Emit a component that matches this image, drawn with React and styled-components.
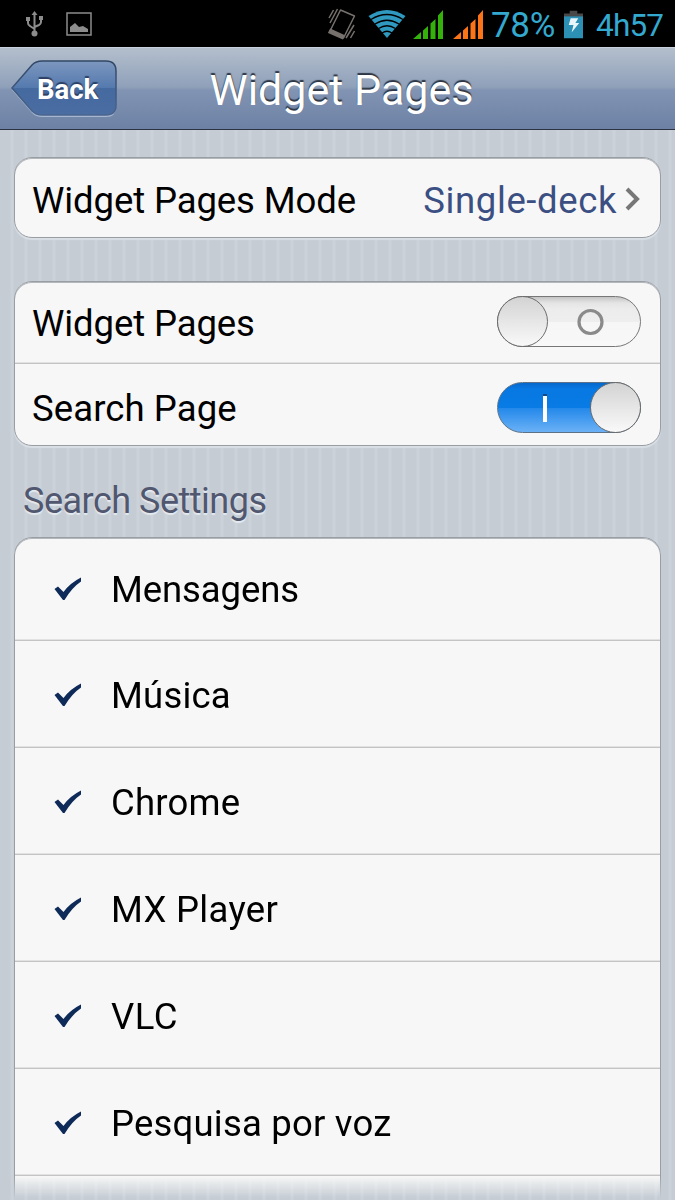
import React from 'react';
import styled, { createGlobalStyle, css } from 'styled-components';

const colors = {
  holo: '#33a9d0',
  card: '#f7f7f7',
  border: '#999ea5',
  divider: '#c4c4c4',
  link: '#3b4f83',
};

const GlobalStyle = createGlobalStyle`
  * {
    box-sizing: border-box;
  }
  body {
    margin: 0;
    font-family: Roboto, sans-serif;
  }
`;

const Screen = styled.div`
  display: flex;
  flex-direction: column;
  width: 675px;
  height: 1200px;
  overflow: hidden;
  background: #c5ccd4 repeating-linear-gradient(90deg, #c5ccd4 0 10px, #cbd2da 11px 13px, #c5ccd4 14px);
`;

const StatusBar = styled.div`
  display: flex;
  flex: none;
  align-items: center;
  height: 47px;
  background: #000;
  color: ${colors.holo};
`;

const StatusIcon = styled.svg`
  flex: none;
  display: block;
  margin-left: ${({ $gap }) => $gap || 0}px;
`;

const StatusText = styled.span`
  width: ${({ $width }) => $width}px;
  margin-left: ${({ $gap }) => $gap}px;
  padding-top: 3px;
  font-size: ${({ $size }) => $size}px;
  line-height: 47px;
  letter-spacing: ${({ $spacing }) => $spacing || 0}px;
  white-space: nowrap;
`;

const NavBar = styled.div`
  display: grid;
  flex: none;
  grid-template-columns: 117px 449px 1fr;
  align-items: center;
  height: 83px;
  border-top: 1px solid #c9d1dd;
  border-bottom: 1px solid #2c3340;
  background: linear-gradient(#b4bfcd 0%, #8fa0b9 48%, #8294b3 52%, #6c81a5 100%);
`;

const BackButton = styled.button`
  display: grid;
  width: 106px;
  height: 58px;
  margin: 0 0 1px 11px;
  padding: 0;
  border: 0;
  background: none;
`;

const BackShape = styled.svg`
  grid-area: 1 / 1;
`;

const BackLabel = styled.span`
  grid-area: 1 / 1;
  padding-left: 26px;
  color: #fff;
  font: bold 27.5px/60px Roboto, sans-serif;
  text-align: left;
  text-shadow: 0 -2px 1px #2b3f63;
`;

const NavTitle = styled.h1`
  margin: 0;
  color: #fff;
  font-size: 43px;
  font-weight: 400;
  line-height: 80px;
  padding-top: 2px;
  text-align: center;
  text-shadow: 0 -2px 1px #2d3644;
`;

const Card = styled.section`
  flex: none;
  margin: ${({ $top }) => $top}px 14px 0;
  border: 1px solid ${colors.border};
  border-radius: 18px;
  background: ${colors.card};
  box-shadow: inset 0 1px 0 #b4b8bd, 0 2px 1px #d9dfe5;
  overflow: hidden;
  ${({ $open }) => $open && css`
    border-bottom: 0;
    border-radius: 18px 18px 0 0;
    box-shadow: inset 0 1px 0 #b4b8bd;
    mask-image: linear-gradient(#000 639px, transparent 661px);
  `}
`;

const Row = styled.div`
  display: flex;
  align-items: center;
  height: ${({ $height }) => $height}px;
  padding: ${({ $shift }) => $shift || 0}px 19px 0 17px;
  border-bottom: ${({ $last }) => ($last ? 0 : 1)}px solid ${colors.divider};
  box-shadow: ${({ $last }) => ($last ? 'none' : 'inset 0 -1px 0 #e2e2e2')};
`;

const RowLabel = styled.span`
  flex: 1;
  padding-top: ${({ $drop }) => $drop || 0}px;
  color: #000;
  font-size: 36.5px;
  line-height: 44px;
  letter-spacing: ${({ $spacing }) => $spacing || 0}px;
  white-space: nowrap;
`;

const RowValue = styled(RowLabel)`
  flex: none;
  color: ${colors.link};
`;

const Chevron = styled.svg`
  margin-left: 8px;
`;

const CheckIcon = styled.svg`
  flex: none;
  margin: 1px 29px 0 22px;
`;

const SectionTitle = styled.h2`
  flex: none;
  height: 91px;
  margin: 0;
  padding-left: 23px;
  color: #50576f;
  font-size: 36px;
  font-weight: 400;
  line-height: 110px;
  letter-spacing: -0.5px;
  text-shadow: 0 2px 1px #e5eaf0;
`;

const Track = styled.span`
  display: flex;
  flex: none;
  align-items: center;
  width: 144px;
  height: 51px;
  margin-bottom: ${({ $on }) => ($on ? 0 : 2)}px;
  border: 1px solid #777;
  border-radius: 26px;
  background: linear-gradient(#c4c4c4, #e4e4e4 12%, #ececec 24%, #eee 50%, #f6f6f6 51%, #f8f8f8);
  ${({ $on }) => $on && css`
    flex-direction: row-reverse;
    border-color: #5d7287;
    background: linear-gradient(#0668cc, #0878e2 12%, #087be5 50%, #2489ea 52%, #6bb1f6);
  `}
`;

const Knob = styled.span`
  width: 51px;
  height: 51px;
  margin: 0 -1px;
  border: 1px solid #6c6c6c;
  border-radius: 50%;
  background: linear-gradient(#d3d3d3, #f9f9f9);
`;

const TrackMark = styled.svg`
  flex: 1;
  height: 48px;
`;

const Toggle = ({ on }) => (
  <Track $on={on}>
    <Knob />
    <TrackMark viewBox="0 0 93 48">
      {on ? (
        <>
          <path d="M45 10h4v3h-4z" fill="#174a80" />
          <path d="M45 12h4v26h-4z" fill="#fff" />
        </>
      ) : (
        <circle cx="43.500" cy="24" r="11.500" fill="none" stroke="#8a8a8a" strokeWidth="3.200" />
      )}
    </TrackMark>
  </Track>
);

const Signal = ({ color, gap }) => (
  <StatusIcon $gap={gap} width="31" height="30" viewBox="0 0 31 30" fill={color}>
    <path d="M0 30l8-7v7zM10 21.500l5-4.500v13h-5zM17.500 14.500l5-4.500v20h-5zM25 6.500l5-5.500v29h-5z" />
  </StatusIcon>
);

const Check = () => (
  <CheckIcon width="28" height="26" viewBox="0 0 28 26">
    <path d="M0.500 12L4 9.500L9.500 15Q16 6 27 0.500V4.500Q18 10.500 10.500 23H9Z" fill="#0e2a58" />
  </CheckIcon>
);

const searchItems = [
  { name: 'Mensagens', spacing: -0.1 },
  { name: 'Música', spacing: 0.2 },
  { name: 'Chrome', spacing: 0.2 },
  { name: 'MX Player', spacing: 0.3 },
  { name: 'VLC', spacing: 0.5 },
  { name: 'Pesquisa por voz', spacing: 0.2 },
];

const App = () => (
  <Screen>
    <GlobalStyle />
    <StatusBar>
      <StatusIcon $gap={25} width="19" height="26" viewBox="0 0 19 26" fill="none" stroke="#8c8c8c" strokeWidth="2">
        <path d="M9.500 3V22M3 8v4q0 2 2 3l4.500 3M16 7v4q0 2-2 3l-4.500 2" />
        <path d="M9.500 0l3 4h-6z" fill="#8c8c8c" stroke="none" />
        <circle cx="9.500" cy="22.500" r="3" fill="#8c8c8c" stroke="none" />
        <path d="M1 6h4v4H1zM14 5h4v4h-4z" fill="#8c8c8c" stroke="none" />
      </StatusIcon>
      <StatusIcon $gap={22} width="26" height="24" viewBox="0 0 26 24" fill="#8c8c8c">
        <path d="M1 1h24v22H1z" fill="none" stroke="#8c8c8c" strokeWidth="1.500" />
        <path d="M4 20v-5l5-4 4 4 4-1 5 3v3z" />
      </StatusIcon>
      <StatusIcon $gap={236} width="28" height="32" viewBox="0 0 28 32" fill="none" stroke="#77716e" strokeWidth="1.500">
        <path d="M12.500 2l14 6-11 22-14-6z" strokeLinejoin="round" />
        <path d="M2.500 21.500l13.500 6-1.500 3-13.500-6z" fill="#77716e" />
        <path d="M9.500 1L2 15M5.500 2L1 10M26 17l-8 13M26.500 23l-4 7" />
      </StatusIcon>
      <StatusIcon $gap={12} width="38" height="30" viewBox="0 0 38 30">
        <path d="M19 29L0.500 7Q19-5 37.500 7Z" fill="#2f99c0" />
        <path d="M3 10.500Q19 0.500 35 10.500M7 15Q19 7.500 31 15M10.500 19.500Q19 14 27.500 19.500M14 24Q19 20.500 24 24" fill="none" stroke="#000" strokeWidth="1.300" />
      </StatusIcon>
      <Signal color="#34b20b" gap={7} />
      <Signal color="#fb7417" gap={9} />
      <StatusText $size={35} $width={64} $gap={7} $spacing={-0.3}>78%</StatusText>
      <StatusIcon $gap={9} width="19" height="30" viewBox="0 0 20 30">
        <path d="M6 1h8v3h6v4H0V4h6z" fill="#484848" />
        <path d="M0 7h20v23H0z" fill="#2c8fb4" />
        <path d="M7 9h8l-3 5h4l-8 10 2-8H5z" fill="#e8f5fb" />
      </StatusIcon>
      <StatusText $size={31.5} $width={70} $gap={13} $spacing={-0.8}>4h57</StatusText>
    </StatusBar>

    <NavBar>
      <BackButton>
        <BackShape width="106" height="58" viewBox="0 0 106 58">
          <defs>
            <linearGradient id="back" x1="0" y1="0" x2="0" y2="1">
              <stop offset="0" stopColor="#7d97bf" />
              <stop offset="0.490" stopColor="#557aae" />
              <stop offset="0.510" stopColor="#456a9f" />
              <stop offset="1" stopColor="#4a6da2" />
            </linearGradient>
            <linearGradient id="backEdge" x1="0" y1="0" x2="0" y2="1">
              <stop offset="0" stopColor="#324764" />
              <stop offset="1" stopColor="#4a6590" />
            </linearGradient>
          </defs>
          <path d="M1 30L21 7Q25 3 31 3H95Q105 3 105 13V47Q105 57 95 57H31Q25 57 21 53Z" fill="#a6b7cf" />
          <path d="M1 28L21 5Q25 1 31 1H95Q105 1 105 11V45Q105 55 95 55H31Q25 55 21 51Z" fill="url(#back)" stroke="url(#backEdge)" strokeWidth="1.500" />
        </BackShape>
        <BackLabel>Back</BackLabel>
      </BackButton>
      <NavTitle>Widget Pages</NavTitle>
    </NavBar>

    <Card $top={27}>
      <Row $height={79} $last $shift={2}>
        <RowLabel $drop={5} $spacing={-0.1}>Widget Pages Mode</RowLabel>
        <RowValue $drop={5} $spacing={0.6}>Single-deck</RowValue>
        <Chevron width="16" height="24" viewBox="0 0 16 24">
          <path d="M2 2l10 10L2 22" fill="none" stroke="#777" strokeWidth="4" />
        </Chevron>
      </Row>
    </Card>

    <Card $top={43}>
      <Row $height={82}>
        <RowLabel $drop={2} $spacing={-0.1}>Widget Pages</RowLabel>
        <Toggle />
      </Row>
      <Row $height={81} $last $shift={6}>
        <RowLabel $drop={3} $spacing={0.1}>Search Page</RowLabel>
        <Toggle on />
      </Row>
    </Card>

    <SectionTitle>Search Settings</SectionTitle>

    <Card $top={0} $open>
      {searchItems.map((item, i) => (
        <Row key={item.name} $height={i === 0 ? 103 : 107} $shift={i === 0 ? 0 : 3}>
          <Check />
          <RowLabel $drop={1} $spacing={item.spacing}>{item.name}</RowLabel>
        </Row>
      ))}
      <Row $height={107} $last />
    </Card>
  </Screen>
);

export default App;
